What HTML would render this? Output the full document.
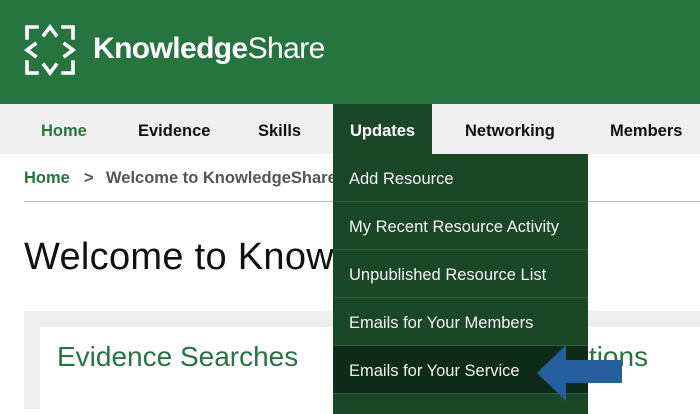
<!DOCTYPE html>
<html><head><style>
*{margin:0;padding:0;box-sizing:border-box}
body{width:700px;height:409px;overflow:hidden;background:#fff;font-family:"Liberation Sans",sans-serif;position:relative}
.a{position:absolute;white-space:nowrap}
.nav{font-weight:bold;font-size:16.5px;color:#111;top:122px}
.dd{position:absolute;left:333px;width:255px;height:48px;border-bottom:1px solid #2f5e3c;color:#f2f2f2;font-size:16.5px;padding:16px 0 0 16px;background:#1a4827}
</style></head><body>
<div class="a" style="left:0;top:0;width:700px;height:104px;background:#267540"></div>
<svg class="a" style="left:0;top:0" width="90" height="104" fill="none" stroke="#fff" stroke-width="3.6" stroke-linecap="square">
<path d="M27 38 L27 27 L37 27"/><path d="M44 35 L50 27 L56 35"/><path d="M63 27 L73 27 L73 38"/>
<path d="M35 44 L27 50 L35 56"/><path d="M65 44 L73 50 L65 56"/>
<path d="M27 62 L27 73 L37 73"/><path d="M44 65 L50 73 L56 65"/><path d="M63 73 L73 73 L73 62"/>
</svg>
<div class="a" style="left:93px;top:32px;font-size:30px;color:#fff;letter-spacing:-0.6px"><b>Knowledge</b>Share</div>
<div class="a" style="left:0;top:104px;width:700px;height:50px;background:#efefef"></div>
<div class="a" style="left:333px;top:104px;width:99px;height:50px;background:#1a4827"></div>
<div class="a nav" style="left:41px;color:#267540">Home</div>
<div class="a nav" style="left:138px">Evidence</div>
<div class="a nav" style="left:258px">Skills</div>
<div class="a nav" style="left:350px;color:#fff">Updates</div>
<div class="a nav" style="left:465px">Networking</div>
<div class="a nav" style="left:610px">Members</div>
<div class="a" style="left:24px;top:169px;font-size:16.5px;font-weight:bold;color:#267540">Home</div>
<div class="a" style="left:84px;top:169px;font-size:16.5px;font-weight:bold;color:#555">&gt;</div>
<div class="a" style="left:106px;top:169px;font-size:16.5px;font-weight:bold;color:#555">Welcome to KnowledgeShare</div>
<div class="a" style="left:24px;top:201px;width:676px;height:1px;background:#bbb"></div>
<div class="a" style="left:24px;top:236px;font-size:38px;color:#111;letter-spacing:0.3px">Welcome to KnowledgeShare</div>
<div class="a" style="left:24px;top:311px;width:676px;height:98px;background:#eeeeee"></div>
<div class="a" style="left:40px;top:327px;width:660px;height:82px;background:#fff"></div>
<div class="a" style="left:590px;top:311px;width:110px;height:16px;background:#eeeeee"></div>
<div class="a" style="left:590px;top:327px;width:110px;height:82px;background:#fff"></div>
<div class="a" style="left:57px;top:341px;font-size:28px;color:#267540">Evidence Searches</div>
<div class="a" style="left:522px;top:341px;font-size:28px;color:#267540">Questions</div>
<div class="dd" style="top:154px">Add Resource</div>
<div class="dd" style="top:202px">My Recent Resource Activity</div>
<div class="dd" style="top:250px">Unpublished Resource List</div>
<div class="dd" style="top:298px">Emails for Your Members</div>
<div class="dd" style="top:346px;background:#0d2b16">Emails for Your Service</div>
<div class="dd" style="top:394px;height:20px;border:0"></div>
<svg class="a" style="left:530px;top:340px" width="100" height="65"><path d="M7 33 L36 5 L36 20 L92 20 L92 43 L36 43 L36 61 Z" fill="#2460a0"/></svg>
</body></html>
